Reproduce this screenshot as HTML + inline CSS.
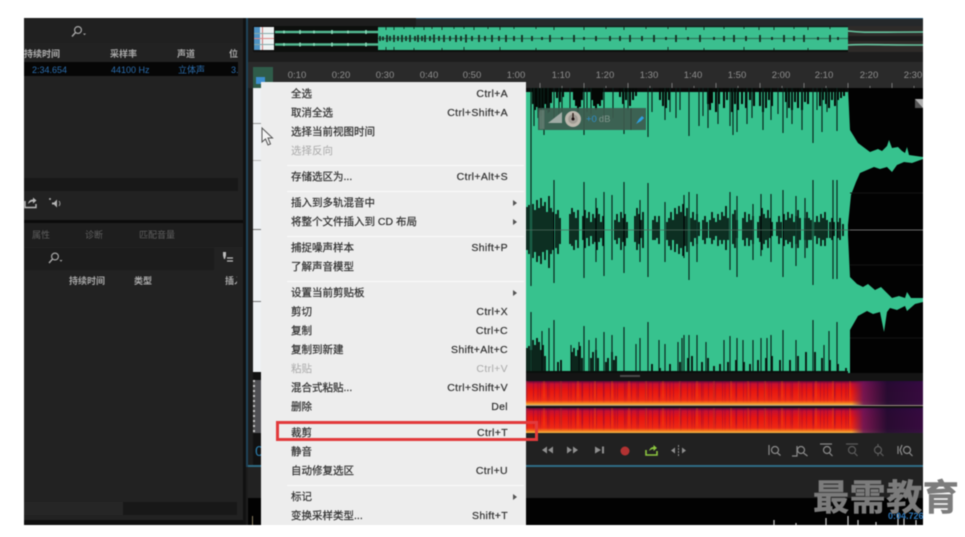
<!DOCTYPE html>
<html lang="zh">
<head>
<meta charset="utf-8">
<title>Audition</title>
<style>
html,body{margin:0;padding:0;background:#fff}
body{width:965px;height:537px;overflow:hidden;position:relative;font-family:"Liberation Sans","Noto Sans CJK SC",sans-serif}
#app{position:absolute;left:24px;top:18px;width:899px;height:507px;background:#1d1d1d;overflow:hidden;filter:blur(.5px)}
.a{position:absolute}
.t{position:absolute;white-space:nowrap;font-size:9px;line-height:12px;margin-top:1px;color:#a8a8a8}
.b{color:#2b6cab}
.tl{position:absolute;top:52px;font-size:9.5px;line-height:12px;color:#8f8f8f;transform:translateX(-50%)}
#menu{position:absolute;left:237px;top:64px;width:265px;height:443px;background:#ededed;font-size:10.5px;color:#303030;-webkit-text-stroke:.2px #303030}
.m{position:absolute;left:30px;right:18px;height:19px;line-height:19px;margin-top:1px;white-space:nowrap}
.m span{position:absolute;right:0;top:0;letter-spacing:.35px}
.d{color:#a9a9a9;-webkit-text-stroke:0}
.s{position:absolute;left:26px;right:2px;height:1px;background:#fafafa}
.r{position:absolute;left:252px;width:0;height:0;border-left:4px solid #555;border-top:3px solid transparent;border-bottom:3px solid transparent}
#spec1,#spec2{position:absolute;left:502px;width:397px;background:
linear-gradient(90deg,rgba(0,0,0,0) 82%,rgba(100,20,90,.85) 85%,rgba(30,10,50,.95) 91%,rgba(45,10,65,.95) 100%),
linear-gradient(0deg,#f6c04a 0,#f2701a 10%,#ee2a16 20%,#e8160f 60%,#c80f30 88%,#5a0a3a 100%)}
#spec1:after,#spec2:after{content:"";position:absolute;left:0;top:0;bottom:0;width:325px;background:repeating-linear-gradient(90deg,rgba(90,0,80,.3) 0 1px,rgba(0,0,0,0) 1px 7px),repeating-linear-gradient(90deg,rgba(120,0,70,.22) 0 2px,rgba(0,0,0,0) 2px 11px),repeating-linear-gradient(90deg,rgba(255,120,0,.2) 0 2px,rgba(0,0,0,0) 2px 17px);-webkit-mask-image:linear-gradient(180deg,#000 0,#000 60%,transparent 92%)}
#wm{position:absolute;left:813px;top:477px;font-size:36px;line-height:42px;font-weight:700;color:#7c7c7c;letter-spacing:.6px;-webkit-text-stroke:.6px #7c7c7c;font-family:"Liberation Sans","Noto Sans CJK SC",sans-serif;white-space:nowrap;filter:blur(.5px)}
</style>
</head>
<body>
<div id="app">
  <!-- left panels -->
  <div class="a" style="left:0;top:0;width:219px;height:202px;background:#222"></div>
  <div class="a" style="left:0;top:0;width:219px;height:25px;background:#202020"></div>
  <svg class="a" style="left:46px;top:6px" width="20" height="16" viewBox="0 0 20 16"><circle cx="8" cy="6" r="3.400" fill="none" stroke="#a5a5a5" stroke-width="1.200"/><path d="M5.500 8.500L2 12.500" stroke="#a5a5a5" stroke-width="1.400"/><path d="M13 9.500h3l-1.500 1.700z" fill="#a5a5a5"/></svg>
  <div class="t" style="left:0;top:29px;color:#b0b0b0;font-weight:700">持续时间</div>
  <div class="t" style="left:86px;top:29px;font-weight:700">采样率</div>
  <div class="t" style="left:153px;top:29px;font-weight:700">声道</div>
  <div class="t" style="left:205px;top:29px;font-weight:700">位</div>
  <div class="a" style="left:0;top:44px;width:214px;height:14px;background:#060606"></div>
  <div class="t b" style="left:8px;top:45px">2:34.654</div>
  <div class="t b" style="left:87px;top:45px">44100 Hz</div>
  <div class="t b" style="left:154px;top:45px">立体声</div>
  <div class="t b" style="left:207px;top:45px">3.</div>
  <div class="a" style="left:0;top:160px;width:214px;height:13px;background:#181818"></div>
  <svg class="a" style="left:0;top:177px" width="46" height="18" viewBox="0 0 46 18"><path d="M1 6v6.500h11V9" fill="none" stroke="#b9b9b9" stroke-width="1.400"/><path d="M4 9c.5-3 2.500-4.500 5-4.500V2.500l3.500 3-3.500 3V6.500c-2 0-3.500 1-5 2.500z" fill="#b9b9b9"/><path d="M28 7.500h2l3-3v8l-3-3h-2z" fill="#b4b4b4"/><path d="M35 6q2 2.500 0 5" fill="none" stroke="#999" stroke-width="1"/><circle cx="26" cy="4" r="1" fill="#aaa"/></svg>
  <div class="a" style="left:0;top:202px;width:219px;height:3px;background:#0b0b0b"></div>
  <div class="a" style="left:0;top:205px;width:219px;height:302px;background:#222"></div>
  <div class="a" style="left:0;top:205px;width:219px;height:24px;background:#1e1e1e"></div>
  <div class="t" style="left:8px;top:210px;color:#5f5f5f">属性</div>
  <div class="t" style="left:61px;top:210px;color:#5f5f5f">诊断</div>
  <div class="t" style="left:115px;top:210px;color:#5f5f5f">匹配音量</div>
  <div class="a" style="left:0;top:230px;width:190px;height:22px;background:#1c1c1c"></div>
  <svg class="a" style="left:23px;top:233px" width="20" height="16" viewBox="0 0 20 16"><circle cx="8" cy="5.500" r="3.400" fill="none" stroke="#a5a5a5" stroke-width="1.200"/><path d="M5.500 8L2 12" stroke="#a5a5a5" stroke-width="1.400"/><path d="M12.500 9h3l-1.500 1.700z" fill="#a5a5a5"/></svg>
  <svg class="a" style="left:197px;top:232px" width="14" height="16" viewBox="0 0 14 16"><path d="M2 2h3v3.500L4 9H3L2 5.500z" fill="#bdbdbd"/><path d="M6 8h6M6 11h6" stroke="#bdbdbd" stroke-width="1.200"/></svg>
  <div class="t" style="left:45px;top:256px;font-weight:700">持续时间</div>
  <div class="t" style="left:110px;top:256px;font-weight:700">类型</div>
  <div class="t" style="left:201px;top:256px;font-weight:700;width:12px;overflow:hidden">插入</div>
  <div class="a" style="left:0;top:484px;width:99px;height:13px;background:#262626"></div>
  <div class="a" style="left:99px;top:484px;width:114px;height:13px;background:#181818"></div>
  <div class="a" style="left:0;top:502px;width:219px;height:5px;background:#101010"></div>

  <!-- divider -->
  <div class="a" style="left:219px;top:0;width:3px;height:507px;background:#111"></div>
  <div class="a" style="left:222px;top:0;width:2px;height:449px;background:#1e4358"></div>
  <div class="a" style="left:224px;top:447px;width:675px;height:2px;background:#2f6b84"></div>
  <div class="a" style="left:392px;top:0;width:507px;height:1px;background:#24506a"></div>
  <div class="a" style="left:392px;top:1px;width:507px;height:7px;background:#25282a"></div>

  <!-- overview -->
  <div class="a" style="left:229px;top:8px;width:670px;height:26px;background:#111"></div>
  <div class="a" style="left:230px;top:9px;width:20px;height:23px;background:linear-gradient(90deg,#4f93c4 0 6px,#e9eef0 6px 8px,#c77 8px 9px,#eef2f2 9px 20px)"></div>
  <div class="a" style="left:230px;top:15px;width:20px;height:1px;background:#8aa"></div>
  <div class="a" style="left:230px;top:20px;width:20px;height:1px;background:#dd8888"></div>
  <div class="a" style="left:230px;top:26px;width:20px;height:1px;background:#8aa"></div>
  <svg class="a" style="left:250px;top:8px" width="649" height="26" viewBox="0 0 649 26" preserveAspectRatio="none">
    <rect width="649" height="26" fill="#0d0f0d"/>
    <path d="M1 6H104M1 18.500H104" stroke="#52b890" stroke-width="2.600"/>
    <path d="M10 4.500V7.500M26 4V8M40 4.500V7.500M58 4V8M74 4.500V7.500M92 4V8M10 17V20M26 16.500V20.500M40 17V20M58 16.500V20.500M74 17V20M92 16.500V20.500" stroke="#8fdcbc" stroke-width="1.500"/>
    <rect x="104" y="1" width="470" height="23" fill="#3bbf8f"/>
    <path d="M104 12.500H574" stroke="#2d7358" stroke-width="1.300"/>
    <path d="M574 0H649V26H574z" fill="#2e2b29"/>
    <path d="M574 5C590 7 600 6 649 6M574 19C590 18 600 19 649 19" stroke="#66c49f" stroke-width="1.600" fill="none"/>
    <path d="M574 12.500H649" stroke="#1c1c1c" stroke-width="5"/>
    <path d="M106 10V15M109 10.500V14.500M113 9V16M116 10V15M120 9V16M124 10V15M128 9V16M132 10V15M136 9V16M141 10V15M144 9V16M148 10V15M151 9V16M156 10V15M160 8.500V16.500M165 10V15M170 9V16M176 10V15M182 9V16M187 10V15M192 8.500V16.500M198 10V15M205 9V16M211 10V15M218 9V16M225 10V15M232 9V16M240 10V15M248 9V16M258 10V15M268 11V14M276 9V16M288 11V14M300 9V16M310 11V14M322 10V15M336 10V15M346 10V15M356 9V16M368 10V15M380 9V16M392 11V14M402 9V16M414 11V14M426 9V16M440 11V14M450 10V15M460 9V16M472 10V15M486 9V16M498 11V14M510 9V16M520 10V15M530 9V16M544 11V14M556 9V16M564 11V14" stroke="#14281f" stroke-width="1.700"/>
    <path d="M112 1V4M120 1V4M130 1V3M140 1V3M150 1V4M158 1V3M168 1V4M180 1V3M190 1V3M200 1V4M214 1V3M226 1V4M240 1V3M262 1V3M280 1V4M310 1V4M332 1V3M350 1V4M372 1V3M394 1V3M412 1V4M430 1V4M450 1V3M470 1V3M485 1V4M500 1V4M520 1V3M534 1V4M556 1V3M112 21V24M120 21V24M140 22V24M168 22V24M190 21V24M226 21V24M262 22V24M310 21V24M350 22V24M394 21V24M430 22V24M470 21V24M500 22V24M534 22V24" stroke="#17372b" stroke-width="1"/>
    <rect x="104" y="0" width="470" height="1.200" fill="#101a15"/>
  </svg>

  <!-- timeline -->
  <div class="a" style="left:224px;top:44px;width:675px;height:26px;background:#2a2a2a"></div>
  <div class="a" style="left:229px;top:49px;width:20px;height:21px;background:#2f5c4a"></div>
  <div class="a" style="left:232px;top:59px;width:9px;height:7px;background:#3d8fd0"></div>
  <div class="tl" style="left:273px">0:10</div><div class="tl" style="left:317px">0:20</div><div class="tl" style="left:361px">0:30</div><div class="tl" style="left:405px">0:40</div><div class="tl" style="left:448px">0:50</div><div class="tl" style="left:492px">1:00</div><div class="tl" style="left:537px">1:10</div><div class="tl" style="left:581px">1:20</div><div class="tl" style="left:625px">1:30</div><div class="tl" style="left:669px">1:40</div><div class="tl" style="left:713px">1:50</div><div class="tl" style="left:757px">2:00</div><div class="tl" style="left:800px">2:10</div><div class="tl" style="left:845px">2:20</div><div class="tl" style="left:889px">2:30</div>
  <svg class="a" style="left:502px;top:62px" width="397" height="8"><path d="M14 3V8M36 6V8M58 3V8M80 6V8M102 3V8M124 6V8M146 3V8M168 6V8M190 3V8M212 6V8M234 3V8M256 6V8M278 3V8M300 6V8M322 3V8M344 6V8M366 3V8M388 6V8" stroke="#777" stroke-width="1"/></svg>

  <!-- left strip -->
  <div class="a" style="left:229px;top:70px;width:10px;height:284px;background:#eef1f4"></div>
  <div class="a" style="left:229px;top:105px;width:9px;height:1px;background:#999"></div>
  <div class="a" style="left:229px;top:142px;width:9px;height:1px;background:#bbb"></div>
  <div class="a" style="left:229px;top:211px;width:9px;height:1px;background:#777"></div>
  <div class="a" style="left:229px;top:283px;width:9px;height:1px;background:#777"></div>
  <div class="a" style="left:229px;top:354px;width:10px;height:93px;background:#111"></div>
  <div class="a" style="left:229px;top:362px;width:8px;height:53px;background:#505054"></div>
  <div class="a" style="left:229px;top:362px;width:2px;height:53px;background:repeating-linear-gradient(180deg,#c8c8c8 0 2px,#555 2px 5px)"></div>
  <div class="t" style="left:231px;top:425px;font-size:15px;line-height:16px;color:#2a7aa8">0</div>

  <!-- main waveform -->
  <svg class="a" style="left:502px;top:70px" width="397" height="285" viewBox="526 88 397 285">
    <rect x="526" y="88" width="397" height="285" fill="#37c28e"/>
    <!-- right black region -->
    <path d="M848 88L850 130L858 143L870 152L878 149L882 151L887 146L889 140L892 148L898 147L902 151L905 153L907 147L909 155L923 157V159L912 163L904 162L897 165L892 172L887 167L880 169L874 167L867 170L860 173L856 182L851 195L848 225V235L850 277L857 284L863 287L868 284L875 290L881 287L887 293L892 298L899 296L905 298L907 292L911 298L923 298V302L915 304L907 311L905 306L897 310L890 308L887 312L884 332L880 312L873 314L867 311L858 316L850 330V373H923V88Z" fill="#020202"/>
    <path d="M850 230H923" stroke="#6a6a6a" stroke-width="1"/>
    <path d="M850 193H923M850 265H923M850 338H923" stroke="#151515" stroke-width="1"/>
    <rect x="526" y="88" width="322" height="4" fill="#0a0a0a"/>
    <!-- top heavy -->
    <path d="M533 88V104M535 88V110M537 88V107M539 88V112M541 88V116M543 88V108M545 88V104M547 88V110M549 88V112M551 88V103M557 88V98M560 88V102M563 88V97M574 88V100M576 88V106M578 88V112M580 88V107M582 88V100M592 88V100M594 88V106M596 88V110M598 88V104M600 88V106M602 88V100M620 88V97M623 88V104M626 88V100M630 88V106M633 88V100M636 88V96M660 88V100M663 88V106M666 88V108M669 88V100M708 88V104M710 88V110M712 88V103M716 88V112M719 88V104M724 88V108M727 88V100M732 88V112M735 88V104M738 88V110M742 88V104M746 88V108M750 88V100M754 88V106M760 88V106M763 88V112M766 88V108M769 88V100M772 88V106M786 88V102M789 88V108M792 88V110M795 88V102M798 88V108M802 88V110M805 88V102M808 88V104M820 88V106M823 88V100M826 88V104M829 88V108M832 88V100M835 88V106M838 88V100M841 88V98M844 88V96" stroke="#040805" stroke-width="2" fill="none"/>
    <path d="M531 88V158M534 88V126M538 88V118M541 88V128M544 88V135M548 88V113M554 88V118M559 88V118M562 88V112M570 88V108M584 88V135M587 88V112M591 88V114M604 88V122M613 88V118M624 88V134M628 88V110M648 88V137M652 88V112M665 88V120M670 88V112M676 88V118M680 88V110M689 88V136M699 88V126M703 88V116M708 88V128M718 88V124M730 88V126M733 88V135M737 88V132M747 88V124M752 88V118M763 88V130M771 88V120M778 88V114M783 88V133M787 88V118M792 88V124M802 88V130M813 88V143M817 88V110M822 88V132M827 88V112M837 88V131" stroke="#08201a" stroke-width="1.100" fill="none"/>
    <!-- HUD -->
    <rect x="538" y="108" width="108" height="22" fill="#3d5a4e" fill-opacity=".92"/>
    <path d="M542 110V129" stroke="#7c9287" stroke-width="5" opacity=".5"/>
    <path d="M548 123L562 112V123Z" fill="#a0aba5"/>
    <circle cx="573" cy="119" r="8" fill="#bdb8ae"/><circle cx="573" cy="119" r="4.800" fill="#a09c94"/><path d="M573 113V119" stroke="#2a1a14" stroke-width="1.300"/><circle cx="573" cy="119" r="1.500" fill="#1a0f0f"/>
    <text x="586" y="122" font-family="Liberation Sans,sans-serif" font-size="9.500" fill="#2f8dc8">+0<tspan fill="#7f958b" dx="2">dB</tspan></text>
    <path d="M631 108V130" stroke="#33493f" stroke-width="1"/>
    <path d="M636 124l3-5 3-3 2 2-3 3-5 3z" fill="#2f9fe2"/>
    <rect x="915" y="99" width="8" height="9" fill="#b0b0b0"/><path d="M915 99L923 108H915Z" fill="#555"/>
    <!-- middle dense -->
    <path d="M527 207V250M529 205V254M533 204V258M535 210V252M537 200V262M539 208V256M541 198V264M543 206V252M545 202V260M547 212V250M549 196V268M551 208V254M553 212V250M556 214V248M558 210V254M560 218V244M570 214V244M572 208V246M574 212V250M576 218V240M578 210V248M583 216V240M585 210V248M587 218V238M589 212V246M591 222V236M593 214V244M595 218V242M597 208V250M599 214V242M601 222V238M603 216V246M615 220V240M617 214V244M619 222V238M621 212V250M623 218V242M625 214V246M627 222V238M635 216V242M637 208V250M639 214V244M641 220V238M643 212V248M653 220V240M655 216V240M657 222V238M659 216V244M667 222V240M669 218V246M671 212V250M673 220V240M675 208V252M677 214V244M679 206V254M681 212V248M683 204V256M685 216V246M687 208V252M691 218V242M693 212V246M695 220V238M697 214V244M699 222V236M703 220V240M705 216V244M707 222V238M710 220V238M712 212V244M714 218V240M716 222V236M718 214V246M720 220V240M722 212V244M724 216V240M726 206V250M728 218V240M733 214V244M735 210V248M737 220V238M743 218V240M745 212V246M747 222V238M749 214V246M751 220V240M753 216V244M758 222V238M760 216V242M762 208V250M764 214V244M766 218V240M768 210V248M770 218V238M772 222V236M777 222V236M779 216V244M781 222V238M784 214V246M786 220V240M788 212V244M790 218V242M792 214V248M794 222V236M796 216V244M798 210V248M800 218V240M805 218V240M807 212V248M809 218V240M811 220V240M815 222V236M817 216V244M819 222V238M821 214V246M823 218V240M825 212V246M827 220V238M830 222V238M832 218V240M834 222V236M838 222V238M840 218V240M843 224V236" stroke="#030a07" stroke-width="1.600" fill="none"/>
    <path d="M531 158V286M554 180V283M584 182V278M596 198V262M604 192V276M612 195V260M624 182V273M640 200V262M648 183V277M665 202V262M684 195V258M689 192V280M697 194V262M730 192V270M737 196V277M753 204V260M761 194V256M771 194V262M783 190V277M796 196V266M805 198V258M813 180V285M833 180V279M837 180V279" stroke="#08201a" stroke-width="1.100" fill="none"/>
    <path d="M526 230H850" stroke="#4f6a5e" stroke-width=".8"/>
    <!-- bottom -->
    <path d="M527 373V348M529 373V346M531 373V350M533 373V340M535 373V345M537 373V338M539 373V342M541 373V350M543 373V345M545 373V356M558 373V362M561 373V360M572 373V352M574 373V348M576 373V356M578 373V350M580 373V346M582 373V358M591 373V358M593 373V352M596 373V350M598 373V358M606 373V362M608 373V358M612 373V352M614 373V360M616 373V356M652 373V364M660 373V368M670 373V364M680 373V362M688 373V358M692 373V356M702 373V362M708 373V358M714 373V366M720 373V364M728 373V362M736 373V360M744 373V362M750 373V364M758 373V360M766 373V358M772 373V356M780 373V360M790 373V360M798 373V356M806 373V352M815 373V352M822 373V358M830 373V360M838 373V364M846 373V368" stroke="#050a08" stroke-width="1.700" fill="none"/>
    <path d="M531 312V373M542 331V373M549 328V373M554 320V373M571 345V373M579 342V373M584 326V373M589 340V373M596 338V373M604 332V373M612 335V373M624 327V373M636 344V373M640 338V373M648 322V373M659 340V373M665 344V373M678 342V373M682 338V373M684 335V373M689 335V373M697 335V373M706 342V373M724 340V373M730 336V373M737 338V373M743 340V373M753 340V373M761 338V373M767 338V373M771 335V373M783 330V373M796 340V373M813 320V373M824 345V373M829 331V373M837 322V373" stroke="#0c261e" stroke-width="1.150" fill="none"/>
    <rect x="526" y="371" width="322" height="2" fill="#0a0f0c"/>
  </svg>

  <!-- lower editor -->
  <div class="a" style="left:502px;top:355px;width:397px;height:8px;background:#141414"></div>
  <div class="a" style="left:596px;top:357px;width:20px;height:2px;background:#4a4a4a"></div>
  <div id="spec1" style="top:363px;height:24px"></div>
  <div class="a" style="left:502px;top:387px;width:397px;height:1px;background:#9a8a80"></div>
  <div class="a" style="left:502px;top:388px;width:397px;height:2px;background:#111"></div>
  <div id="spec2" style="top:390px;height:25px"></div>

  <!-- transport -->
  <div class="a" style="left:502px;top:415px;width:397px;height:32px;background:#212121"></div>
  <svg class="a" style="left:502px;top:415px" width="397" height="32" viewBox="526 433 397 32">
    <g fill="#8f8f8f">
      <path d="M548 450l5-3.500v7zM542 450l5-3.500v7z"/>
      <path d="M567 446.500l5 3.500-5 3.500zM573 446.500l5 3.500-5 3.500z"/>
      <path d="M595 446.500l6 3.500-6 3.500zM602 446.500h2v7h-2z"/>
    </g>
    <circle cx="625" cy="451" r="4.500" fill="#b23232"/>
    <path d="M646 450v5h11v-4" fill="none" stroke="#8cc63f" stroke-width="1.600"/><path d="M649 451c.6-2.500 2.500-4 4.500-4V445l3.500 3-3.500 3V449c-1.500 0-3 .6-4.500 2z" fill="#8cc63f"/>
    <path d="M671 450.500l4-3v6zM686 450.500l-4-3v6z" fill="#8f8f8f"/><path d="M678.500 445v11" stroke="#8f8f8f" stroke-width="1" stroke-dasharray="2 1"/>
    <g fill="none" stroke="#8b8b8b" stroke-width="1.200">
      <path d="M769 445V455"/><circle cx="775" cy="450" r="3.500"/><path d="M777.500 453l3 2.500"/>
      <path d="M792 456h5v-10"/><circle cx="801" cy="450" r="3.500"/><path d="M803.500 453l4 3"/>
      <path d="M820 444h12"/><circle cx="827" cy="450" r="3.500"/><path d="M829.500 453l3 3"/>
    </g>
    <g fill="none" stroke="#5c5c5c" stroke-width="1.200">
      <path d="M846 444h12"/><circle cx="852" cy="450" r="3.500"/><path d="M854.500 453l3 3"/>
      <path d="M878 444v2M878 454v2"/><circle cx="878" cy="450" r="3.500"/><path d="M880.500 453l3 3"/>
    </g>
    <g fill="none" stroke="#8b8b8b" stroke-width="1.200">
      <path d="M898 446V454"/><path d="M902 445l-2 5 2 5"/><circle cx="907" cy="450" r="3.500"/><path d="M909.500 453l3 3"/>
    </g>
  </svg>

  <!-- bottom tracks -->
  <div class="a" style="left:224px;top:449px;width:675px;height:31px;background:#222"></div>
  <div class="a" style="left:224px;top:480px;width:675px;height:27px;background:#020202"></div>
  <div class="a" style="left:228px;top:498px;width:1px;height:9px;background:#8b7d60"></div>
  <svg class="a" style="left:502px;top:480px" width="397" height="27"><path d="M248 27V22M270 27V25M300 27V20M322 27V18M332 27V22M350 27V24M372 27V16M378 27V20M390 27V22" stroke="#ccc" stroke-width="1.200"/></svg>
  <div class="t" style="left:864px;top:491px;color:#2c76b8;font-size:9px;font-weight:700">0:04.726</div>

  <!-- menu -->
  <div id="menu">
    <div class="m" style="top:1.500px">全选<span>Ctrl+A</span></div>
    <div class="m" style="top:20.500px">取消全选<span>Ctrl+Shift+A</span></div>
    <div class="m" style="top:39.500px">选择当前视图时间</div>
    <div class="m d" style="top:58.500px">选择反向</div>
    <div class="s" style="top:83px"></div>
    <div class="m" style="top:84.500px">存储选区为...<span>Ctrl+Alt+S</span></div>
    <div class="s" style="top:109px"></div>
    <div class="m" style="top:110.500px">插入到多轨混音中</div><div class="r" style="top:118px"></div>
    <div class="m" style="top:129.500px">将整个文件插入到 CD 布局</div><div class="r" style="top:137px"></div>
    <div class="s" style="top:154px"></div>
    <div class="m" style="top:155.500px">捕捉噪声样本<span>Shift+P</span></div>
    <div class="m" style="top:174.500px">了解声音模型</div>
    <div class="s" style="top:199px"></div>
    <div class="m" style="top:200.500px">设置当前剪贴板</div><div class="r" style="top:208px"></div>
    <div class="m" style="top:219.500px">剪切<span>Ctrl+X</span></div>
    <div class="m" style="top:238.500px">复制<span>Ctrl+C</span></div>
    <div class="m" style="top:257.500px">复制到新建<span>Shift+Alt+C</span></div>
    <div class="m d" style="top:276.500px">粘贴<span>Ctrl+V</span></div>
    <div class="m" style="top:295.500px">混合式粘贴...<span>Ctrl+Shift+V</span></div>
    <div class="m" style="top:314.500px">删除<span>Del</span></div>
    <div class="m" style="top:340.500px">裁剪<span>Ctrl+T</span></div>
    <div class="m" style="top:359.500px">静音</div>
    <div class="m" style="top:378.500px">自动修复选区<span>Ctrl+U</span></div>
    <div class="s" style="top:403px"></div>
    <div class="m" style="top:404.500px">标记</div><div class="r" style="top:412px"></div>
    <div class="m" style="top:423.500px">变换采样类型...<span>Shift+T</span></div>
  </div>

  <!-- red box -->
  <div class="a" style="left:252px;top:403px;width:256px;height:14px;border:3px solid #e23a3c"></div>

  <!-- cursor -->
  <svg class="a" style="left:237px;top:109px" width="13" height="20" viewBox="0 0 13 20"><path d="M1 1V15L4.500 12L7 18L9.500 17L7 11H11.500Z" fill="#f4f4f4" stroke="#555" stroke-width="1"/></svg>
</div>
<div id="wm">最需教育</div>
</body>
</html>
